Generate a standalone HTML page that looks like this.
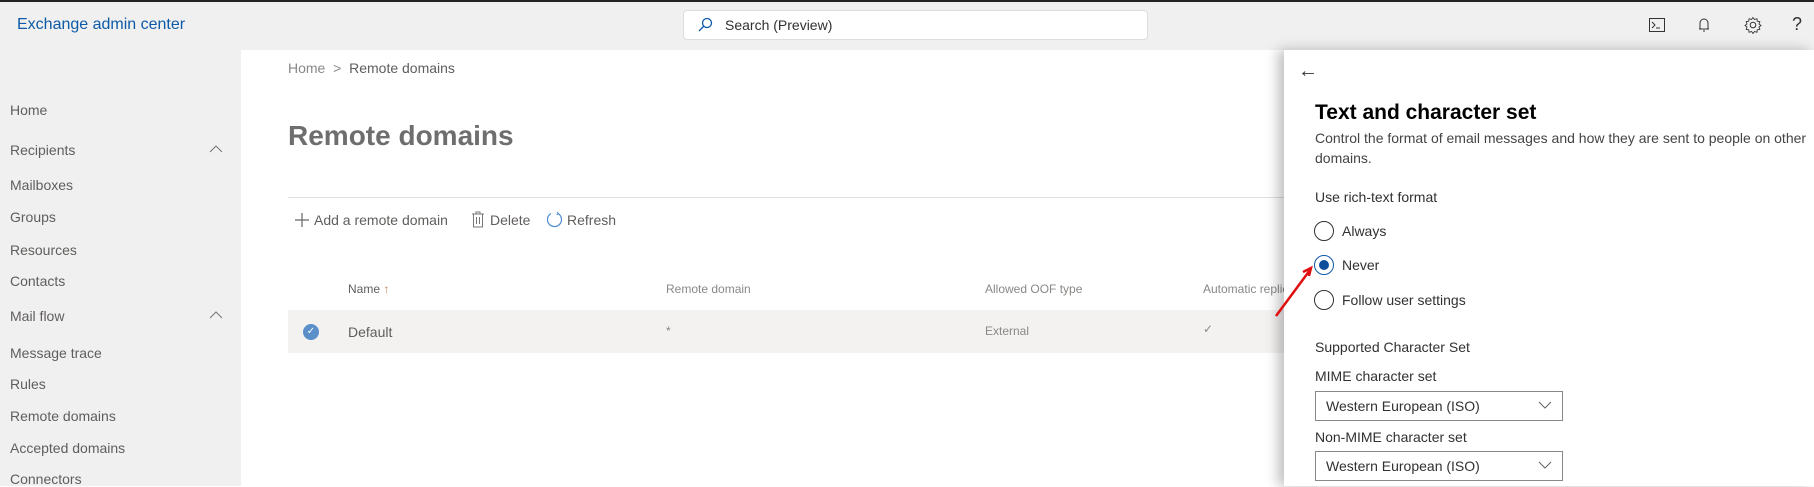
<!DOCTYPE html>
<html><head><meta charset="utf-8"><style>
*{margin:0;padding:0;box-sizing:border-box}
body{width:1814px;height:486px;overflow:hidden;font-family:"Liberation Sans",sans-serif;background:#fff;position:relative;color:#323130}
.a{position:absolute;white-space:nowrap}
.top{left:0;top:0;width:1814px;height:50px;background:#f0f0f0;border-top:2px solid #222}
.side{left:0;top:50px;width:241px;height:436px;background:#f0f0f0}
.nav{left:10px;font-size:14px;color:#605e5c}
.th{font-size:12px;color:#8a8886}
.panel{left:1284px;top:50px;width:530px;height:436px;background:#fff;box-shadow:-6px 0 12px rgba(0,0,0,.25)}
.p{font-size:14px;color:#323130}
.rad{width:20px;height:20px;border:1.5px solid #323130;border-radius:50%}
.dd{width:248px;height:30px;border:1px solid #8a8886;font-size:14px;padding:6px 10px}
</style></head><body>
<div class="a top"></div>
<div class="a" style="left:17px;top:16px;font-size:16px;color:#0f5aa6">Exchange admin center</div>
<div class="a" style="left:683px;top:10px;width:465px;height:30px;background:#fff;border:1px solid #ddd;border-radius:4px"></div>
<svg class="a" style="left:697px;top:17px" width="16" height="16"><circle cx="10" cy="6" r="4.5" fill="none" stroke="#0f5aa6" stroke-width="1.3"/><path d="M7 9L2 14" stroke="#0f5aa6" stroke-width="1.3"/></svg>
<div class="a" style="left:725px;top:17px;font-size:14px;color:#323130">Search (Preview)</div>
<svg class="a" style="left:1649px;top:18px" width="16" height="14"><rect x=".5" y=".5" width="15" height="13" fill="none" stroke="#333"/><path d="M3 4l3 3-3 3M7 10h4" stroke="#333" fill="none"/></svg>
<svg class="a" style="left:1697px;top:16px" width="14" height="18"><path d="M3 13V7a4 4 0 018 0v6zM2 13h10M6 15h2" stroke="#333" fill="none"/></svg>
<svg class="a" style="left:1744px;top:16px" width="18" height="18"><circle cx="9" cy="9" r="2.8" fill="none" stroke="#333"/><path d="M9 1.5l1.5 2 2.4-.8.4 2.5 2.5.4-.8 2.4 2 1.5-2 1.5.8 2.4-2.5.4-.4 2.5-2.4-.8-1.5 2-1.5-2-2.4.8-.4-2.5-2.5-.4.8-2.4-2-1.5 2-1.5-.8-2.4 2.5-.4.4-2.5 2.4.8z" fill="none" stroke="#333" stroke-width=".9"/></svg>
<div class="a" style="left:1792px;top:14px;font-size:18px;color:#333">?</div>
<div class="a side"></div>
<div class="a nav" style="top:102px">Home</div>
<div class="a nav" style="top:142px">Recipients</div>
<div class="a nav" style="top:177px">Mailboxes</div>
<div class="a nav" style="top:209px">Groups</div>
<div class="a nav" style="top:242px">Resources</div>
<div class="a nav" style="top:273px">Contacts</div>
<div class="a nav" style="top:308px">Mail flow</div>
<div class="a nav" style="top:345px">Message trace</div>
<div class="a nav" style="top:376px">Rules</div>
<div class="a nav" style="top:408px">Remote domains</div>
<div class="a nav" style="top:440px">Accepted domains</div>
<div class="a nav" style="top:471px">Connectors</div>
<svg class="a" style="left:209px;top:145px" width="14" height="8"><path d="M1 7l6-6 6 6" stroke="#777" fill="none"/></svg>
<svg class="a" style="left:209px;top:311px" width="14" height="8"><path d="M1 7l6-6 6 6" stroke="#777" fill="none"/></svg>
<div class="a" style="left:288px;top:60px;font-size:14px;color:#8a8886">Home &nbsp;&gt;&nbsp; <span style="color:#605e5c">Remote domains</span></div>
<div class="a" style="left:288px;top:120px;font-size:28px;font-weight:bold;color:#6e6e6e">Remote domains</div>
<div class="a" style="left:288px;top:197px;width:1000px;height:1px;background:#e1dfdd"></div>
<svg class="a" style="left:294px;top:212px" width="16" height="16"><path d="M8 1v14M1 8h14" stroke="#666" stroke-width="1.2"/></svg>
<div class="a" style="left:314px;top:212px;font-size:14px;color:#605e5c">Add a remote domain</div>
<svg class="a" style="left:471px;top:211px" width="14" height="17"><path d="M1 3h12M5 3V1h4v2M2.5 3v13h9V3M5.5 6v7M8.5 6v7" stroke="#777" fill="none"/></svg>
<div class="a" style="left:490px;top:212px;font-size:14px;color:#605e5c">Delete</div>
<svg class="a" style="left:546px;top:211px" width="17" height="17"><path d="M5 2.5A7 7 0 1012 2.5" stroke="#4a8ad0" fill="none" stroke-width="1.2"/><path d="M11 1l1.5 1.8-2 .8" stroke="#4a8ad0" fill="none"/></svg>
<div class="a" style="left:567px;top:212px;font-size:14px;color:#605e5c">Refresh</div>
<div class="a th" style="left:348px;top:282px;color:#605e5c">Name <span style="color:#d08050">↑</span></div>
<div class="a th" style="left:666px;top:282px">Remote domain</div>
<div class="a th" style="left:985px;top:282px">Allowed OOF type</div>
<div class="a th" style="left:1203px;top:282px">Automatic replies</div>
<div class="a" style="left:288px;top:310px;width:1000px;height:43px;background:#f3f2f1"></div>
<div class="a" style="left:303px;top:324px;width:16px;height:16px;border-radius:50%;background:#5b8fc9;color:#fff;font-size:10px;text-align:center;line-height:16px">✓</div>
<div class="a" style="left:348px;top:324px;font-size:14px;color:#605e5c">Default</div>
<div class="a" style="left:666px;top:324px;font-size:12px;color:#8a8886">*</div>
<div class="a" style="left:985px;top:324px;font-size:12px;color:#8a8886">External</div>
<div class="a" style="left:1203px;top:322px;font-size:12px;color:#8a8886">✓</div>
<div class="a panel"></div>
<div class="a" style="left:1298px;top:60px;font-size:20px;color:#333">←</div>
<div class="a" style="left:1315px;top:101px;font-size:21px;font-weight:bold;color:#000">Text and character set</div>
<div class="a p" style="left:1315px;top:130px;color:#444">Control the format of email messages and how they are sent to people on other</div>
<div class="a p" style="left:1315px;top:150px;color:#444">domains.</div>
<div class="a p" style="left:1315px;top:189px">Use rich-text format</div>
<div class="a rad" style="left:1314px;top:221px"></div><div class="a p" style="left:1342px;top:223px">Always</div>
<div class="a rad" style="left:1314px;top:255px;border-color:#0f5aa6"></div><div class="a" style="left:1319px;top:260px;width:10px;height:10px;border-radius:50%;background:#0f4c9a"></div><div class="a p" style="left:1342px;top:257px">Never</div>
<div class="a rad" style="left:1314px;top:290px"></div><div class="a p" style="left:1342px;top:292px">Follow user settings</div>
<div class="a p" style="left:1315px;top:339px">Supported Character Set</div>
<div class="a p" style="left:1315px;top:368px">MIME character set</div>
<div class="a dd" style="left:1315px;top:391px">Western European (ISO)</div>
<div class="a p" style="left:1315px;top:429px">Non-MIME character set</div>
<div class="a dd" style="left:1315px;top:451px">Western European (ISO)</div>
<svg class="a" style="left:1538px;top:401px" width="14" height="8"><path d="M1 1l6 6 6-6" stroke="#666" fill="none"/></svg>
<svg class="a" style="left:1538px;top:461px" width="14" height="8"><path d="M1 1l6 6 6-6" stroke="#666" fill="none"/></svg>
<svg class="a" style="left:1270px;top:260px" width="50" height="60"><path d="M6 56L40 10M33 12l8-4-2 8" stroke="#e01010" stroke-width="2.5" fill="none"/></svg>
</body></html>
